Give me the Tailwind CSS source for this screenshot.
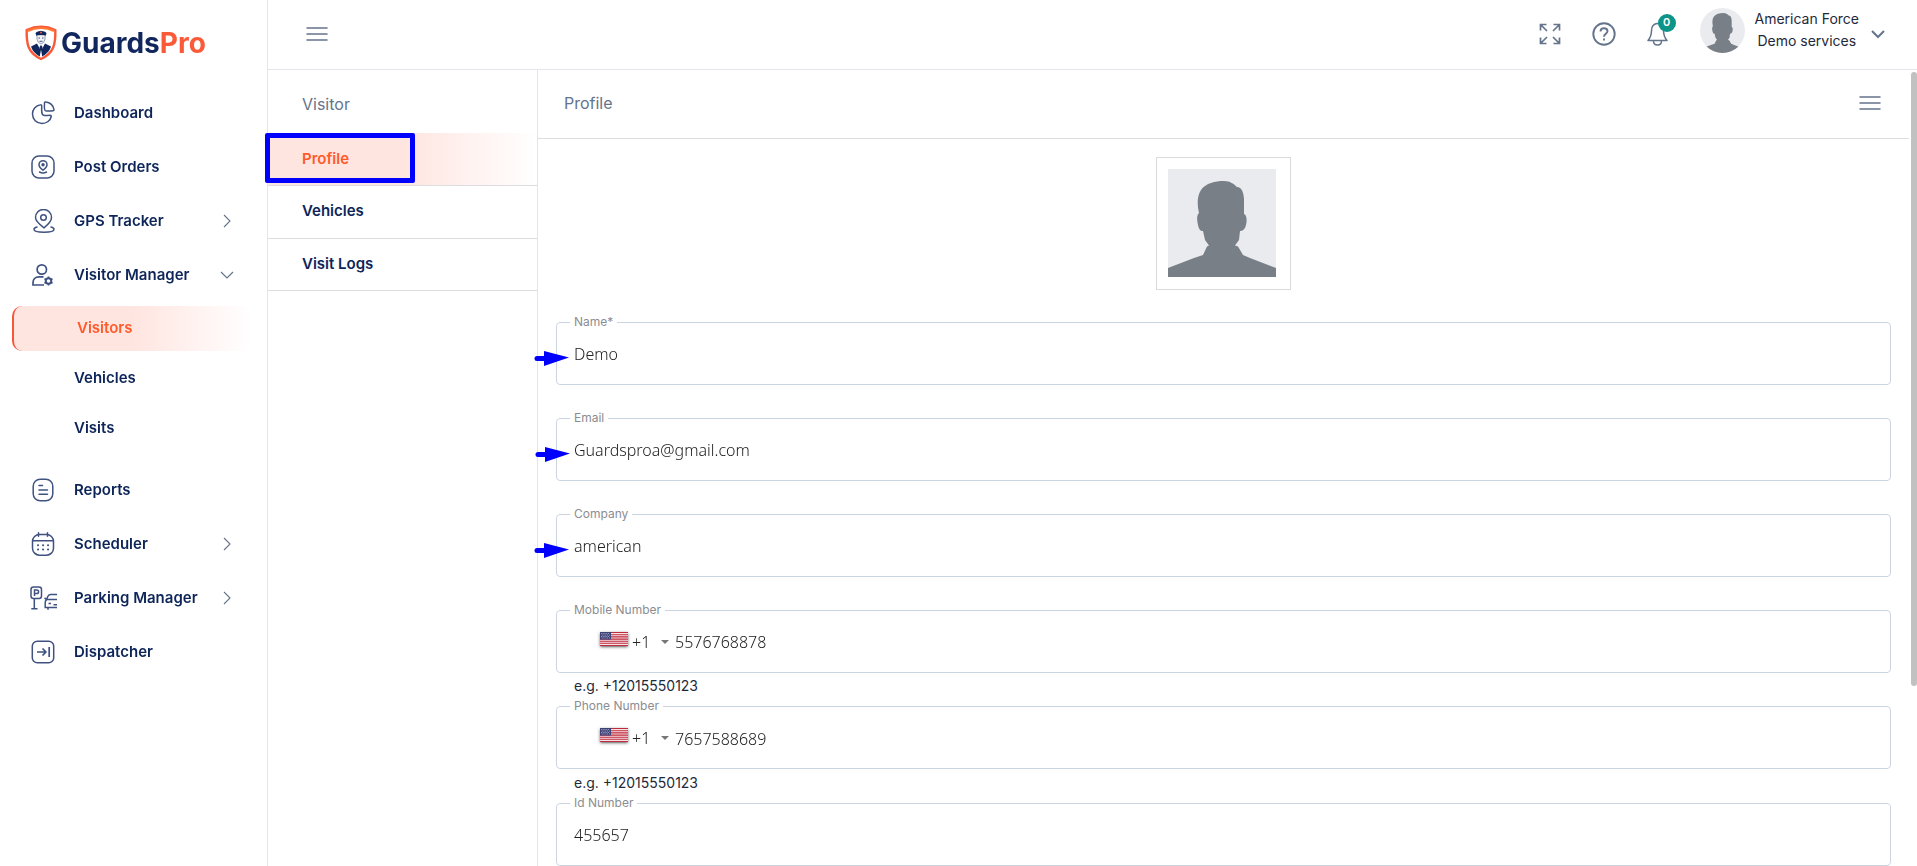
<!DOCTYPE html>
<html lang="en" class="h-full overflow-hidden">
<head>
    <meta charset="UTF-8">
    <meta name="viewport" content="width=device-width, initial-scale=1.0">
    <title>GuardsPro - Visitor Profile</title>
    <script src="https://cdn.jsdelivr.net/npm/@tailwindcss/browser@4"></script>
</head>
<body class="flex h-full overflow-y-auto [scrollbar-width:none] bg-white font-['Inter','Liberation_Sans',sans-serif] text-[#0d2559]">

    <!-- Shared symbols -->
    <svg class="hidden">
        <symbol id="person" viewBox="0 0 108 108">
            <rect width="108" height="108" fill="#e9ebef"/>
            <path fill="#787f87" d="M0 108V99L26 89L35 86L39 77.500L41 76.500L37 71L35 62C32 62 31 60 30 56C28.500 50 29 46 31 44C29 36 29 27 33 21C38 14 47 12 56 12C62 12 66 15 69 18C73 18 75.500 22 76 30V45C79 46 79 52 78 56C77 60 75 62 72 62L71 71L67 76.500L70 77.500L75 86L82 89L108 99V108Z"/>
        </symbol>
        <symbol id="menu" viewBox="0 0 22 16">
            <path d="M1 2h20M1 8h20M1 14h20" fill="none" stroke="#64748b" stroke-width="1.5" stroke-linecap="round"/>
        </symbol>
        <symbol id="chevron-right" viewBox="0 0 14 14">
            <path d="M4 1l6 6-6 6" fill="none" stroke="#64748b" stroke-width="1.1"/>
        </symbol>
        <symbol id="us-flag" viewBox="0 0 28 14">
            <rect width="28" height="14" fill="#f4e4e6"/>
            <path d="M0 .5h28M0 2.7h28M0 4.9h28M0 7.1h28M0 9.2h28M0 11.3h28M0 13.5h28" stroke="#bf2a3c" stroke-width="1.1"/>
            <rect width="11" height="7.6" fill="#3f4478"/>
            <path d="M1 1.5h9M1.8 3h9M1 4.5h9M1.8 6h9" stroke="#c9cbe0" stroke-width=".8" stroke-dasharray=".8 1"/>
        </symbol>
        <symbol id="arrow" viewBox="0 0 36 16">
            <path d="M3 8.5H12" stroke="#0000fe" stroke-width="5" stroke-linecap="round"/>
            <path d="M10 1L35 7.5L10 16Z" fill="#0000fe"/>
        </symbol>
    </svg>

    <!-- Sidebar -->
    <aside class="sticky top-0 h-screen w-[268px] shrink-0 border-r border-[#e4e6ea]">
        <a href="#" class="flex items-center gap-1 pt-[25px] pl-[25px]">
            <svg class="h-9 w-8" viewBox="0 0 32 36">
                <path d="M16 1.8C11 1.8 6 3 1.7 5C1.3 19 3 28 16 34C29 28 30.7 19 30.3 5C26 3 21 1.8 16 1.8Z" fill="#fff" stroke="#fb5a38" stroke-width="2.4"/>
                <path d="M3 6C7 4 12 3 16 3S25 4 29 6" fill="none" stroke="#ff7a35" stroke-width="2"/>
                <path d="M10.5 8.5Q11 6.5 16 5.8Q21 6.5 21.5 8.5L20.5 11Q16 9.5 11.5 11Z" fill="#10265c"/>
                <circle cx="16" cy="7.6" r="1" fill="#f2553a"/>
                <path d="M12 10.5V14Q12.5 18 16 19Q19.5 18 20 14V10.5" fill="#f3f4f8" stroke="#7c86a6" stroke-width=".8"/>
                <path d="M13.5 13h1.5M17 13h1.5M14.5 16.3h3" stroke="#10265c" stroke-width=".8"/>
                <path d="M12 18.5L6 21.5Q8 28 15 31.5V24ZM20 18.5L26 21.5Q24 28 17 31.5V24Z" fill="#10265c"/>
                <path d="M16 20L14.5 22L16 30L17.5 22Z" fill="#10265c"/>
            </svg>
            <span class="text-[28px] leading-9 font-bold text-[#10265c]">Guards<span class="text-[#fb5a38]">Pro</span></span>
        </a>

        <nav class="mt-[25px] text-[15px] font-semibold">
            <a href="#" class="flex h-[54px] items-center gap-[19px] pr-[33px] pl-[31px]">
                <svg class="size-6" viewBox="0 0 24 24" fill="none" stroke="#3f5280" stroke-width="1.5" stroke-linejoin="round">
                    <path d="M9.5 3.8C4.5 4.5 1.5 8.5 1.5 13C1.5 18.5 5.5 22.5 11 22.5C15.5 22.5 19.5 19.5 20.2 15.5C20.3 14.5 20 14.2 19 14.2C16 14.5 14 14.5 12.5 14.2C10.5 13.8 10.5 11 10.7 5.2C10.7 4 10.3 3.6 9.5 3.8Z"/>
                    <path d="M13.5 2C13.5 1.2 14 .8 15 1C19 1.3 22.5 4.5 23 8.5C23 9.3 22.8 9.7 22 9.8C19 10.2 16.5 10.2 14.5 9.8C13.3 9.5 13.3 5 13.5 2Z"/>
                </svg>
                <span>Dashboard</span>
            </a>
            <a href="#" class="flex h-[54px] items-center gap-[19px] pr-[33px] pl-[31px]">
                <svg class="size-6" viewBox="0 0 24 24" fill="none" stroke="#3f5280" stroke-width="1.5">
                    <rect x="1" y="1" width="22" height="22" rx="7"/>
                    <path d="M12 15.2C9 13 8 11.5 8 9.7A4 4 0 0 1 16 9.7C16 11.5 15 13 12 15.2Z"/>
                    <circle cx="12" cy="9.8" r="1" fill="#3f5280"/>
                    <path d="M8.5 17Q12 19 15.5 17" stroke-linecap="round"/>
                </svg>
                <span>Post Orders</span>
            </a>
            <a href="#" class="flex h-[54px] items-center gap-[19px] pr-[33px] pl-[31px]">
                <svg class="size-6" viewBox="0 0 24 24" fill="none" stroke="#3f5280" stroke-width="1.5" stroke-linecap="round">
                    <path d="M13 18.8C6.5 14 4.5 11.5 4.5 8.5A8 8 0 0 1 20.5 8.5C20.5 11.5 19 14 13 18.8Z"/>
                    <circle cx="12.5" cy="8.5" r="2.8"/>
                    <path d="M6 18C4 18.5 3 19.3 3 20.2C3 22 7 23.2 13 23.2S23 22 23 20.2C23 19.3 22 18.5 20 18"/>
                </svg>
                <span class="grow">GPS Tracker</span>
                <svg class="size-3.5"><use href="#chevron-right"/></svg>
            </a>
            <a href="#" class="flex h-[54px] items-center gap-[19px] pr-[33px] pl-[31px]">
                <svg class="size-6" viewBox="0 0 24 24" fill="none" stroke="#3f5280" stroke-width="1.7">
                    <circle cx="10.8" cy="6.5" r="4.7"/>
                    <path d="M12.5 13.8H8C4 13.8 2 16.500 2 19.500V22H13"/>
                    <circle cx="17.5" cy="18" r="2.8" stroke-width="2"/>
                    <path d="M17.5 13.5v2M17.5 20.5v2M13.500 15.700l1.800 1M19.700 19.300l1.800 1M13.500 20.300l1.800-1M19.700 16.700l1.800-1"/>
                </svg>
                <span class="grow">Visitor Manager</span>
                <svg class="size-3.5" viewBox="0 0 14 14"><path d="M1 4l6 6 6-6" fill="none" stroke="#64748b" stroke-width="1.2"/></svg>
            </a>

            <!-- Visitor Manager submenu -->
            <div class="flex flex-col gap-[5px] pt-1 pr-4 pb-3 pl-3">
                <a href="#" class="flex h-[45px] items-center rounded-l-[10px] border-l-2 border-[#f9573a] bg-linear-to-r from-[#ffe5e0] from-50% to-white pl-[63px] text-[#ff5a2b]">Visitors</a>
                <a href="#" class="flex h-[45px] items-center pl-[62px]">Vehicles</a>
                <a href="#" class="flex h-[45px] items-center pl-[62px]">Visits</a>
            </div>

            <a href="#" class="flex h-[54px] items-center gap-[19px] pr-[33px] pl-[31px]">
                <svg class="size-6" viewBox="0 0 24 24" fill="none" stroke="#3f5280" stroke-width="1.5" stroke-linecap="round">
                    <rect x="2.2" y="1.2" width="19.6" height="21.6" rx="7"/>
                    <path d="M8 7.5h3.5M8 12h8.5M8 16.2h8.5"/>
                </svg>
                <span>Reports</span>
            </a>
            <a href="#" class="flex h-[54px] items-center gap-[19px] pr-[33px] pl-[31px]">
                <svg class="size-6" viewBox="0 0 24 24" fill="none" stroke="#3f5280" stroke-width="1.5" stroke-linecap="round">
                    <rect x="1.5" y="2.5" width="21" height="20.7" rx="7"/>
                    <path d="M7.5 .8v3.5M16.5 .8v3.5M1.8 8.8h20.4"/>
                    <path d="M7 13.2h.1M12 13.2h.1M17 13.2h.1M7 17.5h.1M12 17.5h.1M17 17.5h.1" stroke-width="2"/>
                </svg>
                <span class="grow">Scheduler</span>
                <svg class="size-3.5"><use href="#chevron-right"/></svg>
            </a>
            <a href="#" class="flex h-[54px] items-center gap-[17px] pr-[33px] pl-[30px]">
                <svg class="h-6 w-[27px]" viewBox="0 0 27 24" fill="none" stroke="#3f5280" stroke-width="1.5">
                    <rect x="1" y="1" width="10.5" height="11.5" rx="2.5"/>
                    <path d="M4.5 10V4H6.8A1.7 1.7 0 0 1 6.8 7.6H4.5M4.3 12.5V22.5M1.3 22.8H7.5"/>
                    <path d="M27 8.5H20.5Q18.5 8.5 17.5 11L16.8 13.5H27M14.5 12L16.8 13.5Q15.2 14.5 15.2 16.5V21.5H27M18 21.5V23.8M23.5 18.8H27M18.5 17.5h2.5"/>
                </svg>
                <span class="grow">Parking Manager</span>
                <svg class="size-3.5"><use href="#chevron-right"/></svg>
            </a>
            <a href="#" class="flex h-[54px] items-center gap-[19px] pr-[33px] pl-[31px]">
                <svg class="size-6" viewBox="0 0 24 24" fill="none" stroke="#3f5280" stroke-width="1.5" stroke-linejoin="round">
                    <rect x="1.3" y="1.3" width="21.4" height="21.4" rx="5"/>
                    <path d="M6 12h8.5M11.5 8.5L15 12l-3.5 3.5M18.2 7v10" stroke-width="1.7"/>
                </svg>
                <span>Dispatcher</span>
            </a>
        </nav>
    </aside>

    <div class="flex min-w-0 grow flex-col">
        <!-- Top bar -->
        <header class="sticky top-0 z-20 flex h-[70px] shrink-0 items-center border-b border-[#e2e5ee] bg-white pr-8 pl-[38px]">
            <button class="mb-0.5" aria-label="Toggle sidebar"><svg class="h-4 w-[22px]"><use href="#menu"/></svg></button>

            <div class="mb-0.5 ml-auto flex items-center gap-[30px]">
                <button aria-label="Fullscreen">
                    <svg class="size-6" viewBox="0 0 24 24" fill="none" stroke="#64748b" stroke-width="1.7">
                        <path d="M2.5 8.5V2.5H8.5M2.5 2.5L9 9M15.5 2.5H21.5V8.5M21.5 2.5L15 9M2.5 15.5V21.5H8.5M2.5 21.5L9 15M15.5 21.5H21.5V15.5M21.5 21.5L15 15"/>
                    </svg>
                </button>
                <button aria-label="Help">
                    <svg class="size-6" viewBox="0 0 24 24" fill="none" stroke="#64748b" stroke-width="1.9">
                        <circle cx="12" cy="12" r="10.7"/>
                        <path d="M8.5 9.5C8.5 7.3 10 6.2 12 6.2S15.5 7.5 15.5 9.3C15.5 11.7 12 12 12 14.8M12 16.5v2"/>
                    </svg>
                </button>
                <button class="relative" aria-label="Notifications">
                    <svg class="size-6" viewBox="0 0 24 24" fill="none" stroke="#64748b" stroke-width="1.5" stroke-linejoin="round">
                        <path d="M11 1.5C7.5 2 5.5 5 5.5 8.5C5.5 13 4.5 15.5 2 18.5H21C18.5 15.5 17.5 13 17.5 8.5C17.5 5 15 2 11.5 1.5ZM7.5 19C7.5 21.5 9 23 11.5 23S15.5 21.5 15.5 19"/>
                    </svg>
                    <span class="absolute -top-2 left-3 flex size-[18px] items-center justify-center rounded-full bg-[#0d9488] text-[11px] font-semibold text-white">0</span>
                </button>
            </div>

            <button class="mb-1 ml-[30px] flex items-center">
                <svg class="mb-1 size-[45px] rounded-full"><use href="#person"/></svg>
                <span class="mb-1.5 ml-2.5 flex flex-col text-center text-sm leading-[22px] text-[#1e293b]">
                    <span>American Force</span>
                    <span>Demo services</span>
                </span>
                <svg class="mt-0.5 ml-3 h-2.5 w-3.5" viewBox="0 0 14 10"><path d="M1 2l6 6 6-6" fill="none" stroke="#64748b" stroke-width="2"/></svg>
            </button>
        </header>

        <div class="flex grow">
            <!-- Visitor sections -->
            <aside class="w-[270px] shrink-0 border-r border-[#e2e5ee]">
                <h2 class="flex h-[63px] items-center pt-1 pl-[34px] text-base text-[#64748b]">Visitor</h2>
                <nav class="text-[15px] font-semibold">
                    <a href="#" class="relative flex h-[53px] items-center border-b border-[#dcdde0] bg-linear-to-r from-[#ffe5e0] from-50% to-white pl-[34px] text-[#ff5a2b]">
                        Profile
                        <span class="absolute top-0 -left-[3px] h-[50px] w-[150px] rounded-xs border-5 border-[#0000fe]"></span>
                    </a>
                    <a href="#" class="flex h-[53px] items-center border-b border-[#dcdde0] pb-0.5 pl-[34px]">Vehicles</a>
                    <a href="#" class="flex h-[52px] items-center border-b border-[#dcdde0] pl-[34px]">Visit Logs</a>
                </nav>
            </aside>

            <main class="min-w-0 grow">
                <div class="flex h-[69px] items-center justify-between border-b border-[#dcdde0] pr-7 pb-0.5 pl-[26px]">
                    <h1 class="text-base text-[#64748b]">Profile</h1>
                    <button aria-label="Section menu"><svg class="h-4 w-[22px]"><use href="#menu"/></svg></button>
                </div>

                <form class="px-[18px] pb-8">
                    <div class="mx-auto mt-[18px] mb-8 h-[133px] w-[135px] border border-[#d9dadc] p-[11px]">
                        <svg class="size-[108px]"><use href="#person"/></svg>
                    </div>

                    <div class="relative mb-[33px] h-[63px] rounded border border-[#cbd5e1]">
                        <label for="name" class="absolute -top-[9px] left-[13px] bg-white px-1 text-xs text-[#8b8d91]">Name*</label>
                        <input id="name" type="text" value="Demo" class="h-full w-full px-[17px] font-['Noto_Sans',sans-serif] text-base font-light text-[#222] outline-none">
                        <svg class="absolute top-[27px] -left-[23px] h-4 w-9"><use href="#arrow"/></svg>
                    </div>
                    <div class="relative mb-[33px] h-[63px] rounded border border-[#cbd5e1]">
                        <label for="email" class="absolute -top-[9px] left-[13px] bg-white px-1 text-xs text-[#8b8d91]">Email</label>
                        <input id="email" type="email" value="Guardsproa@gmail.com" class="h-full w-full px-[17px] font-['Noto_Sans',sans-serif] text-base font-light text-[#222] outline-none">
                        <svg class="absolute top-[27px] -left-[22px] h-4 w-9"><use href="#arrow"/></svg>
                    </div>
                    <div class="relative mb-[33px] h-[63px] rounded border border-[#cbd5e1]">
                        <label for="company" class="absolute -top-[9px] left-[13px] bg-white px-1 text-xs text-[#8b8d91]">Company</label>
                        <input id="company" type="text" value="american" class="h-full w-full px-[17px] font-['Noto_Sans',sans-serif] text-base font-light text-[#222] outline-none">
                        <svg class="absolute top-[27px] -left-[23px] h-4 w-9"><use href="#arrow"/></svg>
                    </div>

                    <div class="relative flex h-[63px] items-center rounded border border-[#cbd5e1] pl-[43px]">
                        <label for="mobile" class="absolute -top-[9px] left-[13px] bg-white px-1 text-xs text-[#8b8d91]">Mobile Number</label>
                        <button type="button" class="flex items-center font-['Noto_Sans',sans-serif] text-base font-light text-[#222]">
                            <svg class="mb-1.5 h-3.5 w-7 shadow-sm shadow-black/50"><use href="#us-flag"/></svg>
                            <span class="ml-1 w-[29px] text-left">+1</span>
                            <svg class="h-1 w-2" viewBox="0 0 8 4"><path d="M0 0h8L4 4Z" fill="#777"/></svg>
                        </button>
                        <input id="mobile" type="tel" value="5576768878" class="h-full grow pl-1.5 font-['Noto_Sans',sans-serif] text-base font-light text-[#222] outline-none">
                    </div>
                    <p class="h-[33px] pt-[3px] pl-[18px] text-sm text-[#1e293b]">e.g. +12015550123</p>

                    <div class="relative flex h-[63px] items-center rounded border border-[#cbd5e1] pl-[43px]">
                        <label for="phone" class="absolute -top-[9px] left-[13px] bg-white px-1 text-xs text-[#8b8d91]">Phone Number</label>
                        <button type="button" class="flex items-center font-['Noto_Sans',sans-serif] text-base font-light text-[#222]">
                            <svg class="mb-1.5 h-3.5 w-7 shadow-sm shadow-black/50"><use href="#us-flag"/></svg>
                            <span class="ml-1 w-[29px] text-left">+1</span>
                            <svg class="h-1 w-2" viewBox="0 0 8 4"><path d="M0 0h8L4 4Z" fill="#777"/></svg>
                        </button>
                        <input id="phone" type="tel" value="7657588689" class="h-full grow pt-0.5 pl-1.5 font-['Noto_Sans',sans-serif] text-base font-light text-[#222] outline-none">
                    </div>
                    <p class="h-[34px] pt-1 pl-[18px] text-sm text-[#1e293b]">e.g. +12015550123</p>

                    <div class="relative h-[63px] rounded border border-[#cbd5e1]">
                        <label for="id-number" class="absolute -top-[9px] left-[13px] bg-white px-1 text-xs text-[#8b8d91]">Id Number</label>
                        <input id="id-number" type="text" value="455657" class="h-full w-full px-[17px] font-['Noto_Sans',sans-serif] text-base font-light text-[#222] outline-none">
                    </div>
                </form>
            </main>

            <!-- Scroll rail -->
            <div class="sticky top-[70px] flex h-[calc(100vh-70px)] w-2 shrink-0 justify-end pt-0.5">
                <div class="h-[calc(100%-180px)] w-1.5 rounded-full bg-[#c1c1c1]"></div>
            </div>
        </div>
    </div>
</body>
</html>
